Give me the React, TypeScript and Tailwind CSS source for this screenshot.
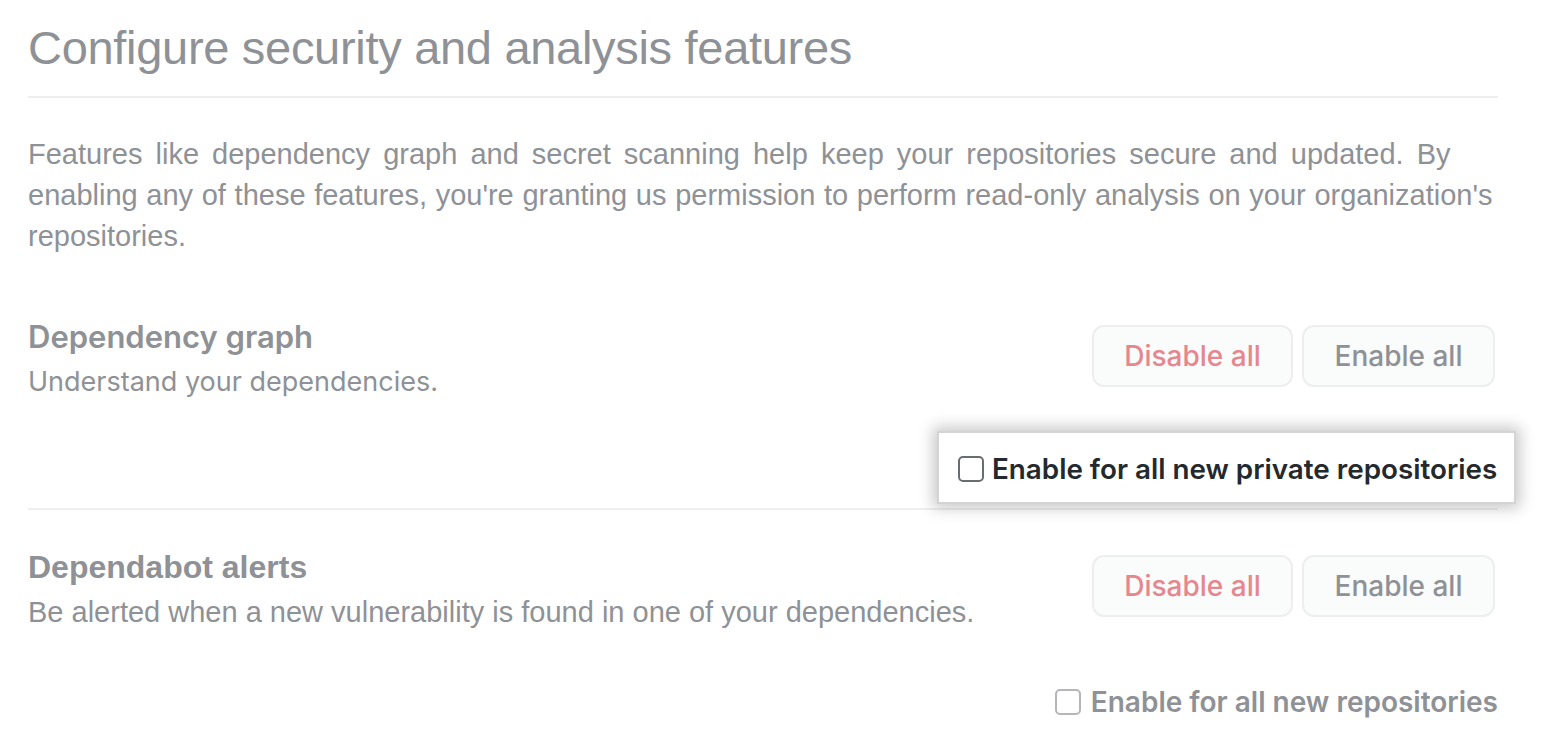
export default function App() {
  const helv = "font-['Liberation_Sans',Arial,sans-serif]";
  const inter = "font-['Inter','Noto_Sans',sans-serif]";

  return (
    <div className="w-[1552px] h-[737px] overflow-hidden bg-white">
      <div className="ml-[28px] w-[1470px] pt-[18px]">
        {/* Subhead */}
        <h1 className={`${helv} text-[47px] leading-[60px] text-[#8e9196] tracking-[-0.3px]`}>
          Configure security and analysis features
        </h1>
        <div className="mt-[18px] h-[2px] bg-[#efefef]" />

        <p className={`${helv} mt-[36px] whitespace-nowrap text-[29px] leading-[41px] text-[#8e9196]`}>
          <span className="[word-spacing:5px]">
            Features like dependency graph and secret scanning help keep your repositories secure and updated. By
          </span>
          <br />
          <span className="[word-spacing:0.6px]">
            enabling any of these features, you're granting us permission to perform read-only analysis on your organization's
          </span>
          <br />
          repositories.
        </p>

        {/* Dependency graph */}
        <div className="mt-[68px] flex items-start justify-between">
          <div className="-mt-[2px]">
            <h3 className={`${inter} text-[31px] leading-[28px] font-semibold text-[#8e9196]`}>Dependency graph</h3>
            <p className={`${inter} mt-[15px] text-[27px] leading-[32px] text-[#8e9196]`}>Understand your dependencies.</p>
          </div>
          <div className="mr-[3px] flex gap-[9px]">
            <button className={`${inter} h-[62px] w-[201px] rounded-[12px] border-2 border-[#eceeef] bg-[#fafbfb] text-[28px] font-medium text-[#e6868e]`}>
              Disable all
            </button>
            <button className={`${inter} h-[62px] w-[193px] rounded-[12px] border-2 border-[#eceeef] bg-[#fafbfb] text-[28px] font-medium text-[#8e9196]`}>
              Enable all
            </button>
          </div>
        </div>

        <div className="mt-[33px] flex justify-end">
          <div className="relative mr-[-18px] flex h-[73px] w-[579px] items-center gap-[8px] border-2 border-[#d4d4d4] bg-white pl-[19px] pt-[5px] shadow-[0_0_14px_4px_rgba(0,0,0,0.22)]">
            <span className="mb-[3px] h-[26px] w-[26px] shrink-0 rounded-[5px] border-2 border-[#6a6d70] bg-white" />
            <span className={`${inter} whitespace-nowrap text-[27.8px] font-semibold text-[#24292e]`}>Enable for all new private repositories</span>
          </div>
        </div>

        <div className="mt-[4px] h-[2px] bg-[#efefef]" />

        {/* Dependabot alerts */}
        <div className="mt-[45px] flex items-start justify-between">
          <div className="-mt-[2px]">
            <h3 className={`${helv} text-[32px] leading-[28px] font-bold text-[#8e9196]`}>Dependabot alerts</h3>
            <p className={`${helv} mt-[15px] text-[29px] leading-[32px] text-[#8e9196]`}>
              Be alerted when a new vulnerability is found in one of your dependencies.
            </p>
          </div>
          <div className="mr-[3px] flex gap-[9px]">
            <button className={`${inter} h-[62px] w-[201px] rounded-[12px] border-2 border-[#eceeef] bg-[#fafbfb] text-[28px] font-medium text-[#e6868e]`}>
              Disable all
            </button>
            <button className={`${inter} h-[62px] w-[193px] rounded-[12px] border-2 border-[#eceeef] bg-[#fafbfb] text-[28px] font-medium text-[#8e9196]`}>
              Enable all
            </button>
          </div>
        </div>

        <div className="mt-[57px] flex items-center justify-end gap-[10px]">
          <span className="h-[26px] w-[26px] shrink-0 rounded-[5px] border-2 border-[#b4b6b9] bg-white" />
          <span className={`${inter} whitespace-nowrap text-[28px] leading-[34px] font-semibold text-[#8e9196]`}>Enable for all new repositories</span>
        </div>
      </div>
    </div>
  );
}
